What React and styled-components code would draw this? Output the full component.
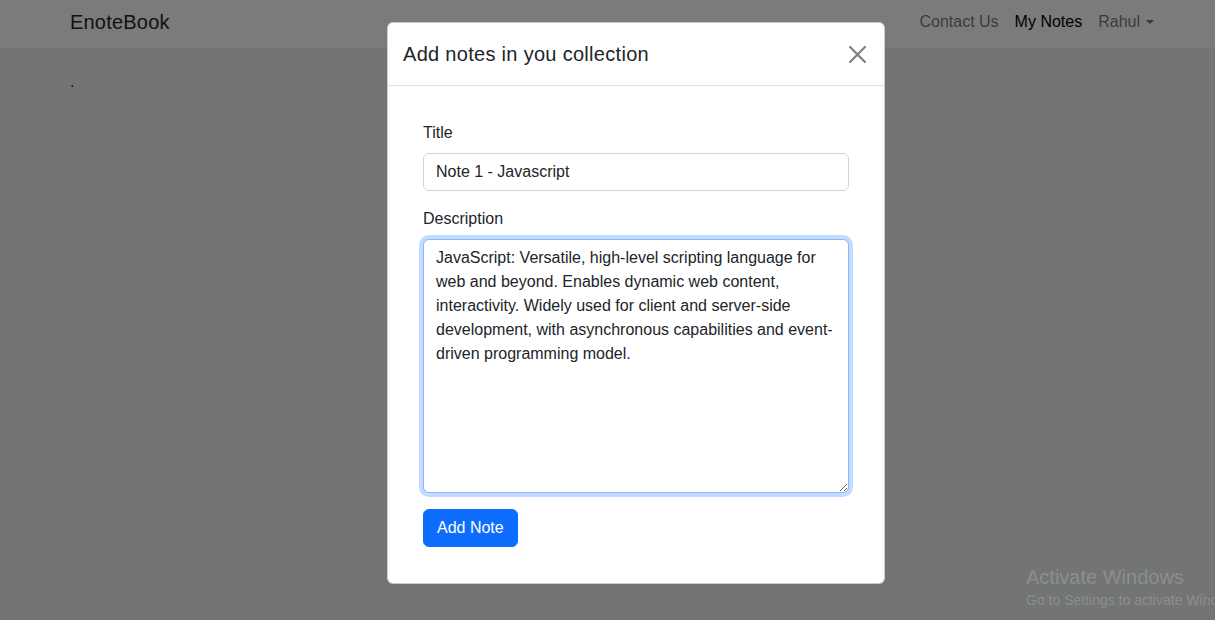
import styled, { createGlobalStyle } from 'styled-components';

const GlobalStyle = createGlobalStyle`
  html, body {
    margin: 0;
    padding: 0;
    height: 100%;
    overflow: hidden;
  }
  body {
    font-family: "Liberation Sans", Arial, sans-serif;
    font-size: 16px;
    line-height: 1.5;
    color: #212529;
    background: #e4ebe8;
  }
  * { box-sizing: border-box; }
`;

const Page = styled.div`
  position: relative;
  width: 100%;
  height: 620px;
`;

const Navbar = styled.nav`
  height: 48px;
  background: #f6f6f6;
  display: flex;
  align-items: center;
  justify-content: space-between;
  padding: 0 61px 0 70px;
`;

const Brand = styled.a`
  font-size: 20px;
  color: #212529;
  text-decoration: none;
  margin-top: -4px;
  letter-spacing: 0.2px;
`;

const NavLinks = styled.ul`
  list-style: none;
  margin: 0;
  padding: 0;
  display: flex;
  gap: 16px;
  margin-top: -5px;
`;

const NavLink = styled.li`
  color: ${(p) => (p.$active ? '#000000' : 'rgba(0,0,0,0.55)')};
  display: flex;
  align-items: center;
  gap: 6px;
`;

const Caret = styled.span`
  width: 0;
  height: 0;
  border-left: 4px solid transparent;
  border-right: 4px solid transparent;
  border-top: 4px solid currentColor;
  margin-top: 1px;
`;

const Main = styled.main`
  padding: 22px 70px;
`;

const Backdrop = styled.div`
  position: absolute;
  inset: 0;
  background: rgba(0, 0, 0, 0.5);
  display: flex;
  justify-content: center;
  align-items: flex-start;
  padding: 22px 0 0 57px;
`;

const Modal = styled.div`
  width: 498px;
  background: #fff;
  border: 1px solid rgba(0, 0, 0, 0.2);
  border-radius: 6px;
  display: flex;
  flex-direction: column;
`;

const ModalHeader = styled.div`
  height: 63px;
  display: flex;
  align-items: center;
  justify-content: space-between;
  padding: 0 14px 0 15px;
  border-bottom: 1px solid #dee2e6;
`;

const ModalTitle = styled.h1`
  margin: 0;
  font-size: 20px;
  font-weight: 500;
  color: #212529;
  letter-spacing: 0.3px;
`;

const CloseButton = styled.button`
  border: 0;
  background: transparent;
  padding: 4px;
  width: 26px;
  height: 26px;
  opacity: 0.5;
  display: flex;
  align-items: center;
  justify-content: center;
  cursor: pointer;
`;

const ModalBody = styled.div`
  padding: 35px 35px 36px;
`;

const Field = styled.div`
  margin-bottom: 16px;
`;

const Label = styled.label`
  display: block;
  margin-bottom: 8px;
  color: #212529;
  line-height: 24px;
`;

const Input = styled.input`
  display: block;
  width: 100%;
  height: 38px;
  padding: 6px 12px;
  font: inherit;
  color: #212529;
  border: 1px solid #ced4da;
  border-radius: 6px;
  background: #fff;
  outline: none;
`;

const TextArea = styled.textarea`
  display: block;
  width: 100%;
  height: 254px;
  padding: 6px 12px;
  font: inherit;
  line-height: 24px;
  color: #212529;
  border: 1px solid #86b7fe;
  border-radius: 6px;
  box-shadow: 0 0 0 4px rgba(13, 110, 253, 0.25);
  outline: none;
  resize: vertical;
`;

const PrimaryButton = styled.button`
  height: 38px;
  padding: 0 13px;
  font: inherit;
  color: #fff;
  background: #0d6efd;
  border: 1px solid #0d6efd;
  border-radius: 6px;
  cursor: pointer;
`;

const Watermark = styled.div`
  position: absolute;
  left: 1026px;
  right: 0;
  top: 564px;
  overflow: hidden;
  color: rgba(255, 255, 255, 0.2);
  white-space: nowrap;
  pointer-events: none;
`;

const WatermarkTitle = styled.div`
  font-size: 20px;
  line-height: 26px;
`;

const WatermarkText = styled.div`
  font-size: 14px;
  line-height: 20px;
`;

const noteText =
  'JavaScript: Versatile, high-level scripting language for web and beyond. Enables dynamic web content, interactivity. Widely used for client and server-side development, with asynchronous capabilities and event-driven programming model.';

export default function App() {
  return (
    <Page>
      <GlobalStyle />
      <Navbar>
        <Brand href="#">EnoteBook</Brand>
        <NavLinks>
          <NavLink>Contact Us</NavLink>
          <NavLink $active>My Notes</NavLink>
          <NavLink>
            Rahul <Caret />
          </NavLink>
        </NavLinks>
      </Navbar>
      <Main>.</Main>

      <Backdrop>
        <Modal>
          <ModalHeader>
            <ModalTitle>Add notes in you collection</ModalTitle>
            <CloseButton aria-label="Close">
              <svg width="17" height="17" viewBox="0 0 16 16">
                <path d="M1 1 L15 15 M15 1 L1 15" stroke="#000" strokeWidth="2" strokeLinecap="round" />
              </svg>
            </CloseButton>
          </ModalHeader>
          <ModalBody>
            <Field>
              <Label htmlFor="title">Title</Label>
              <Input id="title" defaultValue="Note 1 - Javascript" />
            </Field>
            <Field>
              <Label htmlFor="description">Description</Label>
              <TextArea id="description" defaultValue={noteText} />
            </Field>
            <PrimaryButton>Add Note</PrimaryButton>
          </ModalBody>
        </Modal>
      </Backdrop>

      <Watermark>
        <WatermarkTitle>Activate Windows</WatermarkTitle>
        <WatermarkText>Go to Settings to activate Windows.</WatermarkText>
      </Watermark>
    </Page>
  );
}
